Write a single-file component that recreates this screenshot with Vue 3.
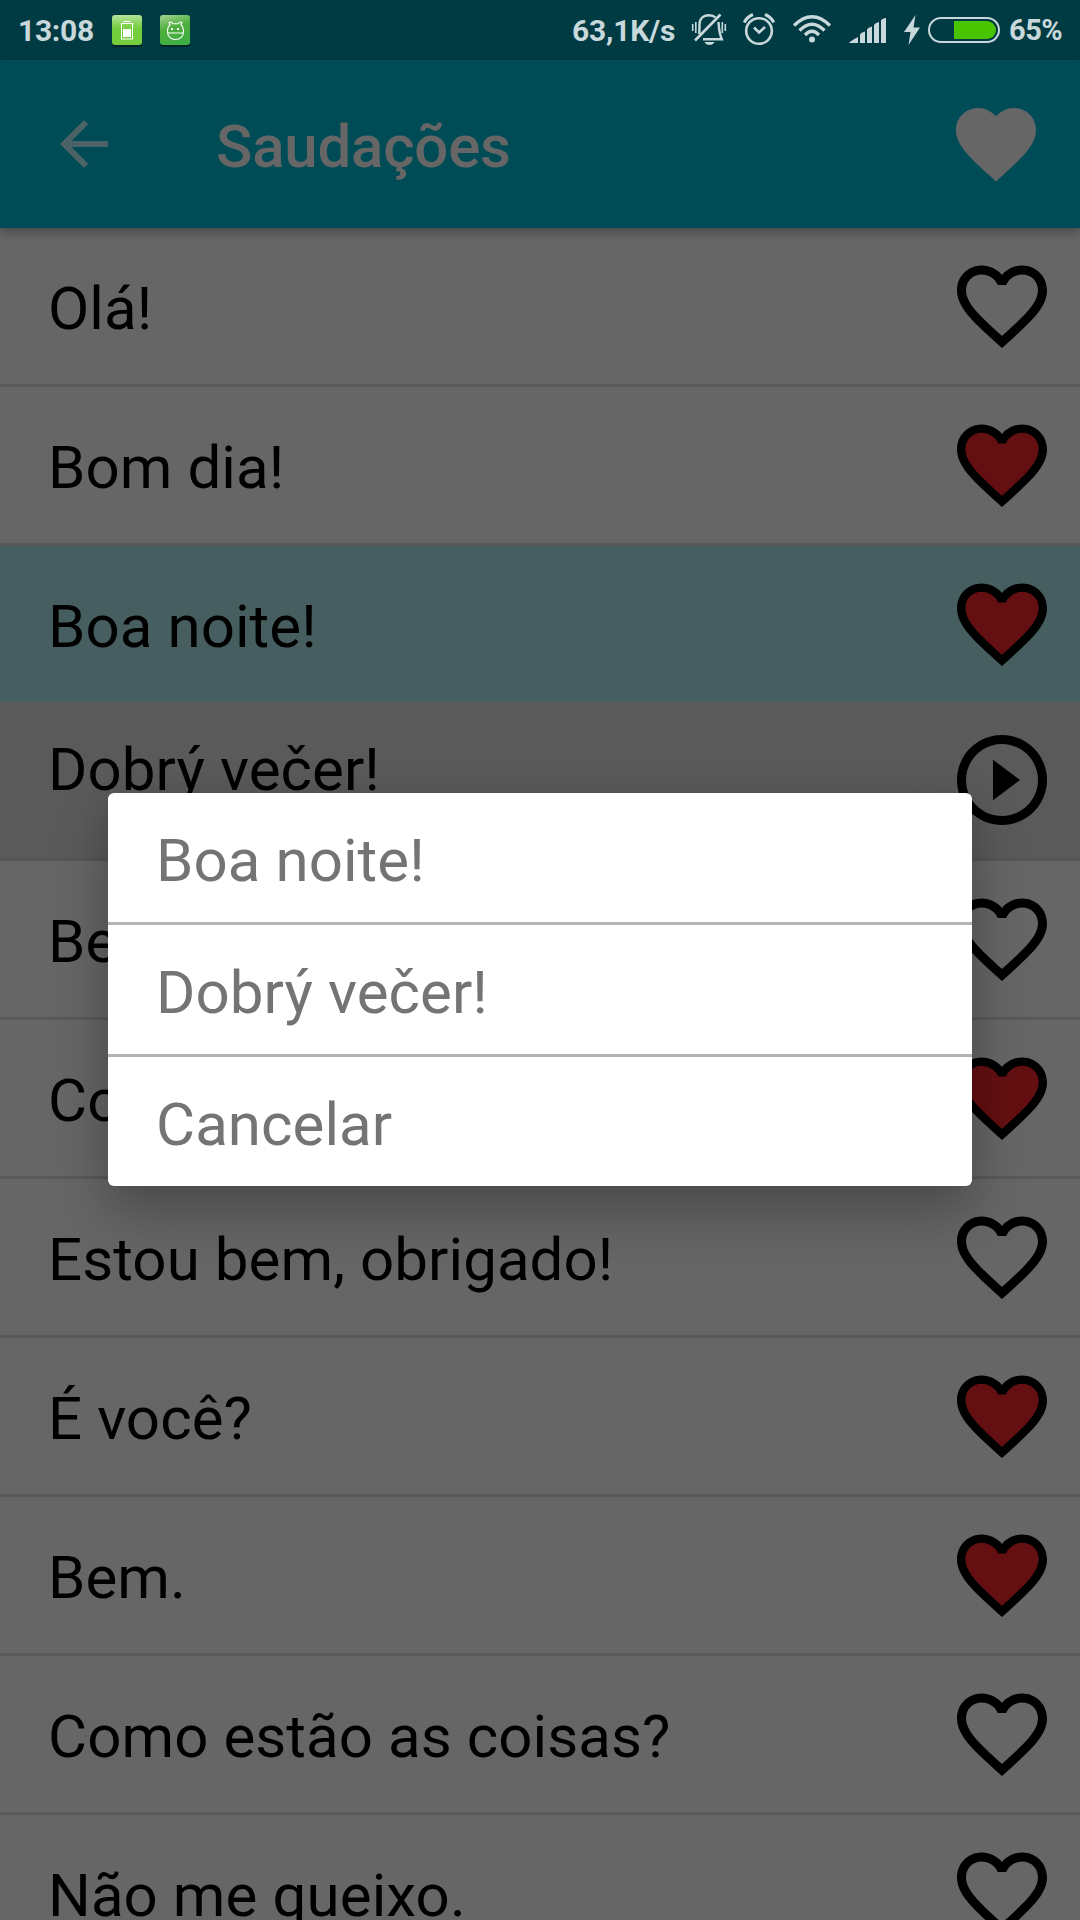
<template>
    <div class="screen">
        <div class="status">
            <span class="clock">13:08</span>
            <svg class="app-icon" viewBox="0 0 32 34">
                <defs>
                    <linearGradient id="green1" x1="0" y1="0" x2="0" y2="1">
                        <stop offset="0" stop-color="#b4e39b" />
                        <stop offset="0.45" stop-color="#74cd3c" />
                        <stop offset="1" stop-color="#74cd3c" />
                    </linearGradient>
                </defs>
                <rect x="1" y="3" width="30" height="30" rx="3" fill="#002329" />
                <rect x="1" y="1" width="30" height="30" rx="3" fill="url(#green1)" />
                <path d="M12.5 7.5h7" stroke="#fff" />
                <rect x="10.5" y="9.5" width="11" height="15.5" fill="none" stroke="#fff" />
                <rect x="12" y="15" width="8" height="8" fill="#fff" />
            </svg>
            <svg class="app-icon second" viewBox="0 0 32 34">
                <defs>
                    <linearGradient id="green2" x1="0" y1="0" x2="0.3" y2="1">
                        <stop offset="0" stop-color="#a3d396" />
                        <stop offset="0.5" stop-color="#4fae3d" />
                        <stop offset="1" stop-color="#3fae42" />
                    </linearGradient>
                </defs>
                <rect x="1" y="3" width="30" height="30" rx="3" fill="#002329" />
                <rect x="1" y="1" width="30" height="30" rx="3" fill="url(#green2)" />
                <path d="M11 11L10 8.5L12 8L14 9.8H19L21 8L23 8.5L22 11C24 12.5 24.5 15 24.5 17.5C24.5 22.5 21 25.5 16.5 25.5S8.5 22.5 8.5 17.5C8.5 15 9 12.5 11 11ZM8.5 19h16" fill="none" stroke="#fff" stroke-width="1.1" />
                <path d="M12 14h2v2h-2zM18 14h2v2h-2z" fill="#fff" />
            </svg>
            <span class="speed">63,1K/s</span>
            <svg class="bell" viewBox="0 0 38 34" fill="none" stroke="#c8d8db" stroke-width="2.4">
                <path d="M9 22C9.5 20 9.500 17 9.500 12.500C9.500 7 13 3.200 19 3.200C22 3.200 24 4 25.500 5.500M28.500 10C29 17 29 21 31.800 27.300H13" />
                <path d="M5 28.500L30.500 2.500" stroke-width="2.600" />
                <path d="M2.700 12v7M5.800 10v11M32.300 10v11M35.300 12v7" stroke-width="1.600" />
                <path d="M14.500 30h10c-1.500 4-8.500 4-10 0z" fill="#c8d8db" stroke="none" />
            </svg>
            <svg class="alarm" viewBox="0 0 34 34" fill="none" stroke="#c8d8db">
                <circle cx="17" cy="19" r="12.800" stroke-width="2.600" />
                <path d="M12 15.500L17 20.500L23 15" stroke-width="2.600" />
                <path d="M2.200 10.500Q5 5 11 2.500M23 2.500Q29 5 31.800 10.500" stroke-width="3" />
            </svg>
            <svg class="wifi" viewBox="0 0 40 30" fill="none" stroke="#c8d8db" stroke-width="3.300">
                <path d="M2 11.500Q20-6 38 11.500" />
                <path d="M7.500 16.500Q20 4 32.500 16.500" />
                <path d="M13 21Q20 13.500 27 21" />
                <circle cx="20" cy="25.500" r="3" fill="#c8d8db" stroke="none" />
            </svg>
            <svg class="signal" viewBox="0 0 38 26" fill="#c8d8db">
                <path d="M0 25Q0 23.800 9 19V25ZM11 25V16.500Q12 14.500 16 13.500V25ZM18 25V11.500Q19 9.500 23 8.500V25ZM25 25V7Q26 5 30 4V25ZM32 25V2.500Q33 .5 37 0V25Z" />
            </svg>
            <svg class="bolt" viewBox="0 0 16 30" fill="#c8d8db">
                <path d="M11.500 0L0 17H6.500L4.500 30L16 12.500H9.500Z" />
            </svg>
            <svg class="battery" viewBox="0 0 72 26">
                <rect x="1" y="1" width="70" height="24" rx="12" fill="none" stroke="#c8d8db" stroke-width="2" />
                <path d="M26 4H59A9 9 0 0 1 59 22H26Z" fill="#48c400" />
            </svg>
            <span class="percent">65%</span>
        </div>

        <header class="toolbar">
            <svg class="back" viewBox="0 0 24 24">
                <path d="M20 11H7.830l5.590-5.590L12 4l-8 8 8 8 1.410-1.410L7.830 13H20v-2z" />
            </svg>
            <h1>Saudações</h1>
            <svg class="favorites" viewBox="0 0 24 24">
                <path :d="heart" />
            </svg>
        </header>

        <ul class="phrases">
            <li v-for="phrase in phrases" :key="phrase.text" :class="phrase.type">
                <span>{{ phrase.text }}</span>
                <svg viewBox="0 0 24 24">
                    <path v-if="phrase.type === 'translation'" :d="play" />
                    <template v-else>
                        <path :d="heart + heartFill" fill-rule="evenodd" />
                        <path v-if="phrase.liked" class="liked" :d="heartFill" />
                    </template>
                </svg>
            </li>
        </ul>

        <div class="dialog">
            <div v-for="option in options" :key="option" class="option">{{ option }}</div>
        </div>
    </div>
</template>

<script setup>
const heart = 'M12 21.350l-1.450-1.320C5.400 15.360 2 12.280 2 8.500 2 5.420 4.420 3 7.500 3c1.740 0 3.410.81 4.500 2.090C13.090 3.810 14.760 3 16.500 3 19.580 3 22 5.420 22 8.500c0 3.780-3.400 6.860-8.550 11.540L12 21.350z'
const heartFill = 'M12.100 18.550l-.1.1-.1-.1C7.140 14.240 4 11.390 4 8.500 4 6.500 5.500 5 7.500 5c1.540 0 3.040.99 3.570 2.360h1.870C13.460 5.990 14.960 5 16.500 5c2 0 3.500 1.500 3.500 3.500 0 2.890-3.140 5.740-7.900 10.050z'
const play = 'M10 16.500l6-4.500-6-4.500v9zM12 2C6.480 2 2 6.480 2 12s4.480 10 10 10 10-4.480 10-10S17.520 2 12 2zm0 18c-4.410 0-8-3.590-8-8s3.590-8 8-8 8 3.590 8 8-3.590 8-8 8z'

const phrases = [
    { text: 'Olá!', liked: false },
    { text: 'Bom dia!', liked: true },
    { text: 'Boa noite!', liked: true, type: 'selected' },
    { text: 'Dobrý večer!', type: 'translation' },
    { text: 'Bem-vindo!', liked: false },
    { text: 'Como vai você?', liked: true },
    { text: 'Estou bem, obrigado!', liked: false },
    { text: 'É você?', liked: true },
    { text: 'Bem.', liked: true },
    { text: 'Como estão as coisas?', liked: false },
    { text: 'Não me queixo.', liked: false }
]

const options = ['Boa noite!', 'Dobrý večer!', 'Cancelar']
</script>

<style>
body {
    margin: 0;
    overflow: hidden;
}
</style>

<style scoped>
.screen {
    position: relative;
    width: 1080px;
    height: 1920px;
    overflow: hidden;
    background: #666;
    font-family: Roboto, sans-serif;
}

.status {
    display: flex;
    align-items: center;
    box-sizing: border-box;
    height: 60px;
    padding-left: 18px;
    background: #003b43;
    color: #c8d8db;
    font-size: 30px;
    font-weight: 700;
    white-space: nowrap;
}

.status svg {
    flex: none;
}

.clock {
    width: 93px;
    letter-spacing: -0.3px;
}

.app-icon {
    width: 32px;
    height: 34px;
    margin-top: 2px;
}

.app-icon.second {
    margin-left: 16px;
}

.speed {
    width: 118px;
    margin-left: 381px;
    letter-spacing: -0.2px;
}

.bell {
    width: 38px;
    height: 34px;
    margin-top: -2px;
}

.alarm {
    width: 34px;
    height: 34px;
    margin: -2px 0 0 14px;
}

.wifi {
    width: 40px;
    height: 30px;
    margin: 0 0 2px 16px;
}

.signal {
    width: 38px;
    height: 26px;
    margin: 1px 0 0 17px;
}

.bolt {
    width: 16px;
    height: 30px;
    margin-left: 17px;
}

.battery {
    width: 72px;
    height: 26px;
    margin-left: 8px;
}

.percent {
    margin-left: 9px;
    font-size: 29px;
    letter-spacing: -0.5px;
}

.toolbar {
    position: relative;
    display: flex;
    align-items: center;
    box-sizing: border-box;
    height: 168px;
    padding: 0 36px 0 48px;
    background: #004c56;
    box-shadow: 0 4px 10px rgba(0, 0, 0, 0.3);
}

.toolbar h1 {
    flex: 1;
    margin: 6px 0 0 96px;
    color: #666;
    font-size: 60px;
    font-weight: 500;
    line-height: 70px;
    letter-spacing: -0.2px;
}

.back {
    width: 72px;
    height: 72px;
    fill: #4b6266;
}

.favorites {
    width: 96px;
    height: 96px;
    fill: #666;
}

.phrases {
    margin: 0;
    padding: 0;
    list-style: none;
}

.phrases li {
    display: flex;
    align-items: center;
    justify-content: space-between;
    box-sizing: border-box;
    height: 159px;
    padding: 0 24px 0 48px;
    border-bottom: 3px solid #595959;
    color: #000;
    font-size: 60px;
    line-height: 70px;
    letter-spacing: 0.08px;
    white-space: nowrap;
}

.phrases span {
    padding-top: 5px;
}

.phrases svg {
    width: 108px;
    height: 108px;
}

.phrases .liked {
    fill: #641012;
    stroke: #641012;
    stroke-width: 0.3;
}

.phrases .selected {
    background: #475e60;
    border-bottom-color: #5a5a5a;
}

.phrases .translation {
    height: 156px;
    background: #5a5a5a;
    border-bottom-color: #565656;
}

.translation span {
    padding: 0 0 23px;
}

.translation svg {
    margin-top: -3px;
}

.dialog {
    position: absolute;
    top: 793px;
    left: 108px;
    width: 864px;
    border-radius: 6px;
    background: #fff;
    box-shadow: 0 28px 56px rgba(0, 0, 0, 0.25), 0 4px 30px rgba(0, 0, 0, 0.08);
}

.option {
    box-sizing: border-box;
    height: 129px;
    padding: 33px 48px 0;
    color: #747474;
    font-size: 60px;
    line-height: 70px;
    letter-spacing: 0.08px;
}

.option + .option {
    height: 132px;
    border-top: 3px solid #b3b3b3;
}
</style>
